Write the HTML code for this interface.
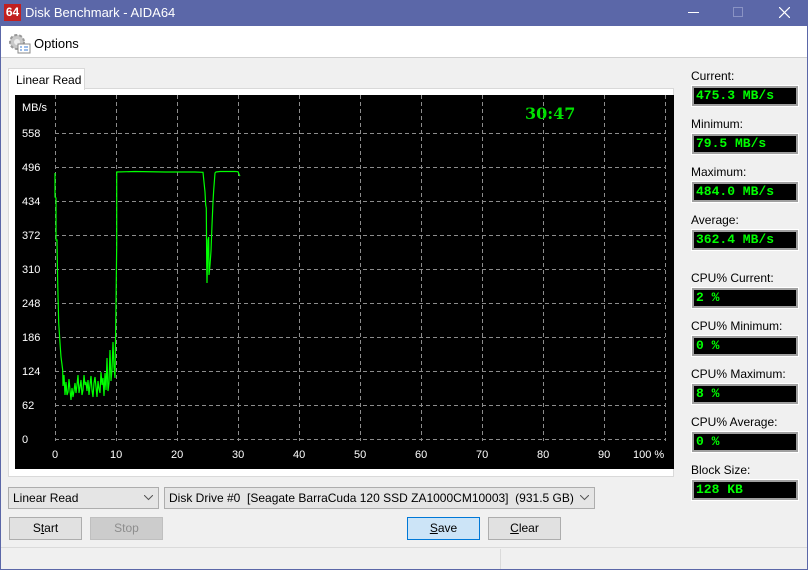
<!DOCTYPE html><html><head><style>
*{margin:0;padding:0;box-sizing:border-box}
body{width:808px;height:570px;background:#f0f0f0;font-family:"Liberation Sans",sans-serif;font-size:12px;color:#000;position:relative;overflow:hidden}
.a{position:absolute}
.lbl{position:absolute;left:691px;font-size:12px}
.box{position:absolute;left:692px;width:106px;height:20px;background:#000;border:2px solid #a0a0a0;outline:1px solid #fff;color:#00ff00;font-family:"Liberation Mono",monospace;font-weight:bold;font-size:13px;line-height:16px;padding-left:2px}
.btn{position:absolute;top:517px;height:23px;border:1px solid #adadad;background:#e1e1e1;text-align:center;line-height:21px}
.cmb{position:absolute;top:487px;height:22px;border:1px solid #adadad;background:#e5e5e5;line-height:20px;padding-left:4px}
.cmb svg{position:absolute;right:5px;top:7px}
</style></head><body>
<div class="a" style="left:0;top:0;width:808px;height:570px;border:1px solid #5b67a8"></div>
<div class="a" style="left:0;top:0;width:808px;height:26px;background:#5b67a8;color:#fff;font-size:13px">
 <div class="a" style="left:4px;top:4px;width:17px;height:17px;background:#c21f1f;color:#fff;font-weight:bold;font-size:12px;line-height:17px;text-align:center">64</div>
 <div class="a" style="left:25px;top:5px">Disk Benchmark - AIDA64</div>
 <div class="a" style="left:688px;top:12px;width:11px;height:1px;background:#fff"></div>
 <div class="a" style="left:733px;top:7px;width:10px;height:10px;border:1px solid #8a93c4"></div>
 <svg class="a" style="left:779px;top:7px" width="11" height="11"><path d="M0 0L11 11M11 0L0 11" stroke="#fff" stroke-width="1.2"/></svg>
</div>
<div class="a" style="left:1px;top:26px;width:806px;height:32px;background:#fff;border-bottom:1px solid #d0d0d0"></div>
<svg class="a" style="left:7px;top:32px" width="24" height="22"><circle cx="10" cy="10" r="7" fill="#c8c8c8" stroke="#999" stroke-dasharray="3 2" stroke-width="2"/><circle cx="10" cy="10" r="3" fill="#eee"/><rect x="11" y="12" width="12" height="9" fill="#fff" stroke="#888"/><path d="M13 15h2M17 15h4M13 18h2M17 18h4" stroke="#3a7bd5"/></svg>
<div class="a" style="left:34px;top:36px;font-size:13px">Options</div>
<div class="a" style="left:8px;top:88px;width:666px;height:389px;background:#fff;border:1px solid #d9d9d9"></div>
<div class="a" style="left:8px;top:68px;width:77px;height:22px;background:#fff;border:1px solid #d9d9d9;border-bottom:none;padding:4px 0 0 7px">Linear Read</div>
<svg class="a" style="left:15px;top:95px" width="659" height="374">
<rect width="659" height="374" fill="#000"/>
<g stroke="#8c8c8c" stroke-dasharray="4 3" stroke-width="1" shape-rendering="crispEdges">
<path d="M40.5 0V346M101.5 0V346M162.5 0V346M223.5 0V346M284.5 0V346M345.5 0V346M406.5 0V346M467.5 0V346M528.5 0V346M589.5 0V346M650.5 0V346"/>
<path d="M40 38.5H650M40 72.5H650M40 106.5H650M40 140.5H650M40 174.5H650M40 208.5H650M40 242.5H650M40 276.5H650M40 310.5H650M40 344.5H650"/>
</g>
<g fill="#fff" font-family="Liberation Sans,sans-serif" font-size="11">
<text x="7" y="16">MB/s</text><text x="7" y="42">558</text><text x="7" y="76">496</text><text x="7" y="110">434</text><text x="7" y="144">372</text><text x="7" y="178">310</text><text x="7" y="212">248</text><text x="7" y="246">186</text><text x="7" y="280">124</text><text x="7" y="314">62</text><text x="7" y="348">0</text>
<text x="37" y="363">0</text><text x="95" y="363">10</text><text x="156" y="363">20</text><text x="217" y="363">30</text><text x="278" y="363">40</text><text x="339" y="363">50</text><text x="400" y="363">60</text><text x="461" y="363">70</text><text x="522" y="363">80</text><text x="583" y="363">90</text><text x="618" y="363">100 %</text>
</g>
<text x="510" y="24" fill="#00e000" font-family="DejaVu Serif,serif" font-weight="bold" font-size="16">30:47</text>
<polyline fill="none" stroke="#00ff00" stroke-width="1.2" points="40,78 40,102 41,103 41,145 42,145 42.7,188 43.7,228 45,248 46,262 47.7,275 48,291 49,280 50,300 51,287 52,300 53,297 54,284 55,295 56,305 57,293 58,302 59,296 60,288 61,298 62,290 63,280 64,298 65,292 66,285 67,300 68,295 69,280 70,290 71,287 72,296 73,285 74,300 75,290 76,281 77,295 78,302 79,288 80,282 81,292 82,302 83,286 84,294 85,298 86,277 87,290 88,283 89,301 90,278 91,295 92,263 93,296 94,288 95,255 96,286 97,275 98,247 99,272 100,283 101,208 101.7,150 101.7,77 120,76.5 150,77 180,77 188,77.3 190,97 190.7,110 191.3,113 191.7,168 192,188 193,145 193.7,142 194,180 195,170 196,156 197,130 198,107 198.7,95 200,78 201,77 205,76.5 220,76.5 223,76.7 224.3,80 225,81"/>
</svg>
<div class="lbl" style="top:69px">Current:</div><div class="box" style="top:86px">475.3 MB/s</div>
<div class="lbl" style="top:117px">Minimum:</div><div class="box" style="top:134px">79.5 MB/s</div>
<div class="lbl" style="top:165px">Maximum:</div><div class="box" style="top:182px">484.0 MB/s</div>
<div class="lbl" style="top:213px">Average:</div><div class="box" style="top:230px">362.4 MB/s</div>
<div class="lbl" style="top:271px">CPU% Current:</div><div class="box" style="top:288px">2 %</div>
<div class="lbl" style="top:319px">CPU% Minimum:</div><div class="box" style="top:336px">0 %</div>
<div class="lbl" style="top:367px">CPU% Maximum:</div><div class="box" style="top:384px">8 %</div>
<div class="lbl" style="top:415px">CPU% Average:</div><div class="box" style="top:432px">0 %</div>
<div class="lbl" style="top:463px">Block Size:</div><div class="box" style="top:480px">128 KB</div>
<div class="cmb" style="left:8px;width:151px">Linear Read<svg width="9" height="6"><path d="M0 0L4.5 4.5L9 0" fill="none" stroke="#555"/></svg></div>
<div class="cmb" style="left:164px;width:431px">Disk Drive #0&nbsp; [Seagate BarraCuda 120 SSD ZA1000CM10003]&nbsp; (931.5 GB)<svg width="9" height="6"><path d="M0 0L4.5 4.5L9 0" fill="none" stroke="#555"/></svg></div>
<div class="btn" style="left:9px;width:73px">S<u>t</u>art</div>
<div class="btn" style="left:90px;width:73px;color:#8d8d8d;background:#cccccc;border-color:#bfbfbf">Stop</div>
<div class="btn" style="left:407px;width:73px;background:#cce4f7;border-color:#0078d7"><u>S</u>ave</div>
<div class="btn" style="left:488px;width:73px"><u>C</u>lear</div>
<div class="a" style="left:1px;top:547px;width:806px;height:1px;background:#dadada"></div>
<div class="a" style="left:500px;top:549px;width:1px;height:20px;background:#dadada"></div>
</body></html>
